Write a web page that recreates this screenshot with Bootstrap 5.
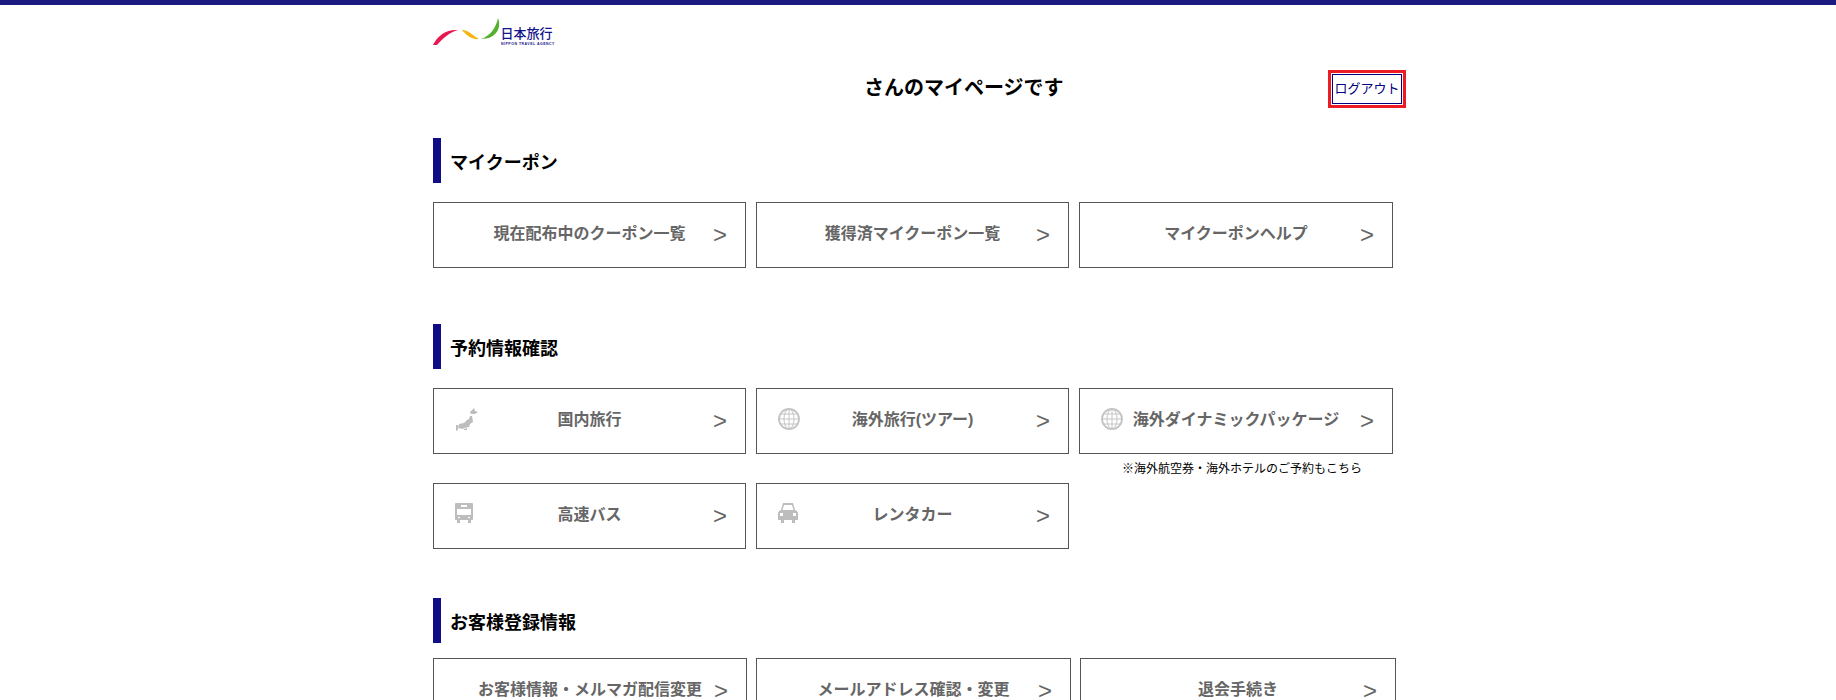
<!DOCTYPE html>
<html lang="ja">
<head>
<meta charset="utf-8">
<title>マイページ</title>
<link href="https://cdn.jsdelivr.net/npm/bootstrap@5.3.0/dist/css/bootstrap.min.css" rel="stylesheet">
<style>
html,body{height:700px;overflow:hidden}
body{font-family:"Liberation Sans","Noto Sans CJK JP",sans-serif;color:#000;background:#fff}
.top-rule{height:5px;background:#1a1a80}
.page-box{width:970px;margin:0 auto}
.logo-area{height:65px;padding-top:13px}
.logo-area svg{display:block}
.logo-jp{font-family:"Noto Sans CJK JP",sans-serif;font-size:13px;fill:#14148a;font-weight:500}
.logo-en{font-family:"Liberation Sans",sans-serif;font-size:3.5px;font-weight:700;fill:#14148a;letter-spacing:.5px}
.title-row{height:38px;margin-right:-3px}
.my-title{font-size:20px;font-weight:700;line-height:30px;padding-left:431px;padding-top:3px;margin:0}
.logout-frame{border:3px solid #ed1c24;padding:1px;width:78px;height:38px;display:flex}
.logout-link{flex:1;border:1px solid #000080;color:#000080;font-size:13px;line-height:1;text-decoration:none;display:flex;align-items:center;justify-content:center;white-space:nowrap;padding-bottom:1px}
.sec-head{height:45px;border-left:8px solid #100c85;padding-left:9px;padding-top:4px;font-size:18px;font-weight:700;margin:0;line-height:1}
.tile-grid{display:grid;grid-template-columns:313px 313px 314px;column-gap:10px;align-items:start}
.tile-grid-wide{grid-template-columns:314px 315px 316px;column-gap:9px}
.nav-tile{height:66px;border:1px solid #555;color:#666;font-size:16px;font-weight:700;text-decoration:none;padding-bottom:3px;background:#fff}
.nav-tile:hover{color:#666}
.tile-arrow{right:18px;top:17px;font-size:24px;font-weight:400;line-height:30px;font-family:"Liberation Sans",sans-serif;color:#666}
.tile-icon{left:21px;top:19px;fill:#bdbdbd}
.tile-note{font-size:12px;line-height:29px;height:29px;text-align:center;color:#000;white-space:nowrap;padding-left:12px;padding-top:1px}
.sp-a{margin-top:30px}
.gap-a{margin-top:19px}
.sp-b{margin-top:56px}
.sp-c{margin-top:49px}
.gap-c{margin-top:15px}
</style>
</head>
<body>
<div class="top-rule"></div>
<div class="page-box">
  <div class="logo-area">
    <svg width="124" height="30" viewBox="0 0 124 30" role="img" aria-label="日本旅行">
      <path d="M0 27C5 17 14 11 25 12C17 14 10 20 4 27Z" fill="#e8174f"/>
      <path d="M29 12C36 12 40 18 46 21C39 22 33 17 29 12Z" fill="#f4b414"/>
      <path d="M48 21C57 18 63 10 65 0C69 10 63 21 48 21Z" fill="#55b030"/>
      <text class="logo-jp" x="67.500" y="20">日本旅行</text>
      <text class="logo-en" x="68" y="26.500">NIPPON TRAVEL AGENCY</text>
    </svg>
  </div>
  <div class="title-row d-flex justify-content-between align-items-start">
    <h1 class="my-title">さんのマイページです</h1>
    <div class="logout-frame"><a class="logout-link" href="#">ログアウト</a></div>
  </div>

  <h2 class="sec-head d-flex align-items-center sp-a">マイクーポン</h2>
  <div class="tile-grid gap-a">
    <a href="#" class="nav-tile position-relative d-flex align-items-center justify-content-center">現在配布中のクーポン一覧<span class="tile-arrow position-absolute">&gt;</span></a>
    <a href="#" class="nav-tile position-relative d-flex align-items-center justify-content-center">獲得済マイクーポン一覧<span class="tile-arrow position-absolute">&gt;</span></a>
    <a href="#" class="nav-tile position-relative d-flex align-items-center justify-content-center">マイクーポンヘルプ<span class="tile-arrow position-absolute">&gt;</span></a>
  </div>

  <h2 class="sec-head d-flex align-items-center sp-b">予約情報確認</h2>
  <div class="tile-grid gap-a">
    <a href="#" class="nav-tile position-relative d-flex align-items-center justify-content-center">
      <svg class="tile-icon position-absolute" width="24" height="24" viewBox="0 0 24 24" aria-hidden="true"><path d="M16 3l3-3 1 3 3 1-3 2-4 0-1-2zM17 8l1 6-3 2-1 3-5 1-1 1-5-1 1-4 5-1 3-3 2-1 1-3z"/><path d="M1 17l2 0 0 5-2 1zM9 21l3-1 0 2-3 0z"/></svg>
      国内旅行<span class="tile-arrow position-absolute">&gt;</span></a>
    <a href="#" class="nav-tile position-relative d-flex align-items-center justify-content-center">
      <svg class="tile-icon position-absolute" width="22" height="22" viewBox="0 0 22 22" aria-hidden="true" style="fill:none;stroke:#c4c4c4"><circle cx="11" cy="11" r="10" stroke-width="1.8"/><ellipse cx="11" cy="11" rx="5" ry="10"/><path d="M11 1v20M1 11h20M2.500 6h17M2.500 16h17"/></svg>
      海外旅行(ツアー)<span class="tile-arrow position-absolute">&gt;</span></a>
    <div>
      <a href="#" class="nav-tile position-relative d-flex align-items-center justify-content-center">
        <svg class="tile-icon position-absolute" width="22" height="22" viewBox="0 0 22 22" aria-hidden="true" style="fill:none;stroke:#c4c4c4"><circle cx="11" cy="11" r="10" stroke-width="1.8"/><ellipse cx="11" cy="11" rx="5" ry="10"/><path d="M11 1v20M1 11h20M2.500 6h17M2.500 16h17"/></svg>
        海外ダイナミックパッケージ<span class="tile-arrow position-absolute">&gt;</span></a>
      <div class="tile-note">※海外航空券・海外ホテルのご予約もこちら</div>
    </div>
    <a href="#" class="nav-tile position-relative d-flex align-items-center justify-content-center">
      <svg class="tile-icon position-absolute" width="18" height="20" viewBox="0 0 18 20" aria-hidden="true"><path fill-rule="evenodd" d="M1 0h16a1 1 0 0 1 1 1v15a1 1 0 0 1-1 1h-1v3h-3v-3H5v3H2v-3H1a1 1 0 0 1-1-1V1a1 1 0 0 1 1-1zM6 2v2h6V2zM2 6v6h14V6zM3 14v1h2v-1zM13 14v1h2v-1z"/></svg>
      高速バス<span class="tile-arrow position-absolute">&gt;</span></a>
    <a href="#" class="nav-tile position-relative d-flex align-items-center justify-content-center">
      <svg class="tile-icon position-absolute" width="20" height="20" viewBox="0 0 20 20" aria-hidden="true"><path fill-rule="evenodd" d="M5 0h10l2 7 2 1 1 2v7h-3v3h-3v-3H6v3H3v-3H0v-7l1-2 2-1zM6 2L4.500 7h11L14 2zM2 10v3h3v-3zM15 10v3h3v-3z"/></svg>
      レンタカー<span class="tile-arrow position-absolute">&gt;</span></a>
  </div>

  <h2 class="sec-head d-flex align-items-center sp-c">お客様登録情報</h2>
  <div class="tile-grid tile-grid-wide gap-c">
    <a href="#" class="nav-tile position-relative d-flex align-items-center justify-content-center">お客様情報・メルマガ配信変更<span class="tile-arrow position-absolute">&gt;</span></a>
    <a href="#" class="nav-tile position-relative d-flex align-items-center justify-content-center">メールアドレス確認・変更<span class="tile-arrow position-absolute">&gt;</span></a>
    <a href="#" class="nav-tile position-relative d-flex align-items-center justify-content-center">退会手続き<span class="tile-arrow position-absolute">&gt;</span></a>
  </div>
</div>
<script src="https://cdn.jsdelivr.net/npm/bootstrap@5.3.0/dist/js/bootstrap.bundle.min.js"></script>
</body>
</html>
